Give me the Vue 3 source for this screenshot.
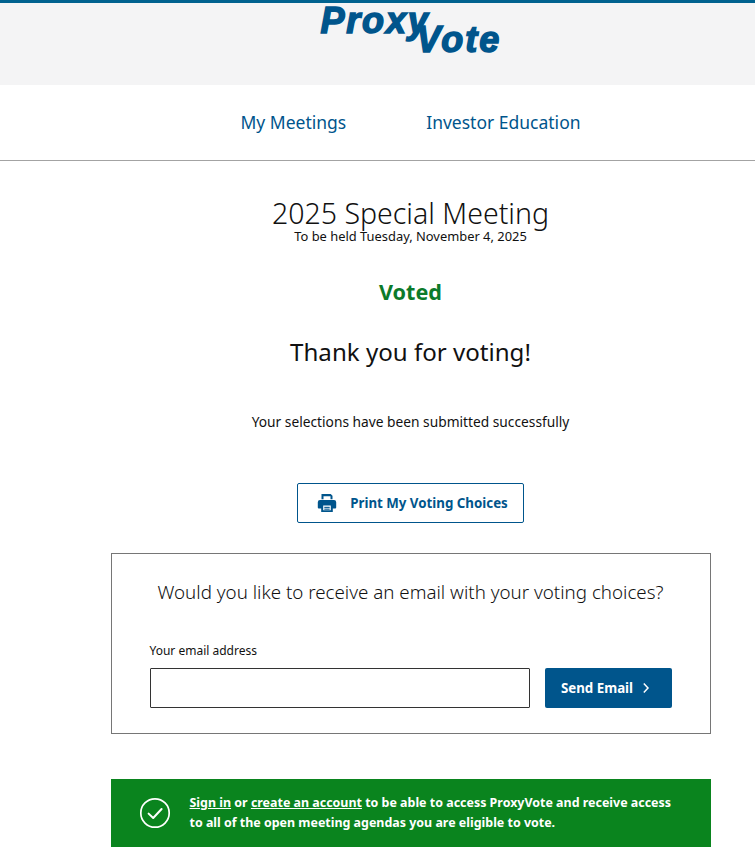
<template>
  <div class="page">
    <header class="brand">
      <div class="logo" aria-label="ProxyVote">
        <span class="logo-proxy">Proxy</span>
        <span class="logo-vote">Vote</span>
      </div>
    </header>

    <nav class="nav">
      <a v-for="item in navItems" :key="item" class="nav-link">{{ item }}</a>
    </nav>

    <main class="main">
      <h1 class="title">2025 Special Meeting</h1>
      <p class="held">To be held Tuesday, November 4, 2025</p>
      <p class="status">Voted</p>
      <h2 class="thanks">Thank you for voting!</h2>
      <p class="submitted">Your selections have been submitted successfully</p>

      <button class="print-btn" type="button">
        <svg class="print-icon" viewBox="0 0 20 20" width="20" height="20">
          <path fill="#00558c" d="M4.500 1h9.200L15.500 2.800V6.200h-2V3.200H6.500v3h-2z" />
          <path fill="#00558c" fill-rule="evenodd" d="M3 7h14a2.200 2.200 0 0 1 2.200 2.200v5.300a1 1 0 0 1-1 1h-2.400V19H4.200v-3.500H1.800a1 1 0 0 1-1-1V9.200A2.200 2.200 0 0 1 3 7zm3.200 5.600v4.700h7.600v-4.700z" />
          <rect x="7.300" y="13.800" width="5.400" height="1.100" fill="#00558c" />
          <rect x="7.300" y="15.600" width="5.400" height="1.100" fill="#00558c" />
        </svg>
        <span>Print My Voting Choices</span>
      </button>

      <section class="email-card">
        <h3 class="email-title">Would you like to receive an email with your voting choices?</h3>
        <label class="email-label" for="email">Your email address</label>
        <div class="email-row">
          <input id="email" class="email-input" type="text" />
          <button class="send-btn" type="button">
            <span>Send Email</span>
            <svg viewBox="0 0 8 12" width="8" height="12">
              <path d="M1.800 1.600 6 6l-4.200 4.400" fill="none" stroke="#fff" stroke-width="1.500" />
            </svg>
          </button>
        </div>
      </section>

      <section class="signin">
        <svg class="check" viewBox="0 0 32 32" width="32" height="32">
          <circle cx="16" cy="16" r="14.200" fill="none" stroke="#fff" stroke-width="1.700" />
          <path d="M9.600 16.600l4.600 4.400 8.400-9" fill="none" stroke="#fff" stroke-width="2" stroke-linecap="round" stroke-linejoin="round" />
        </svg>
        <p class="signin-text">
          <a>Sign in</a> or <a>create an account</a> to be able to access ProxyVote and receive access<br />
          to all of the open meeting agendas you are eligible to vote.
        </p>
      </section>
    </main>
  </div>
</template>

<script setup>
const navItems = ['My Meetings', 'Investor Education']
</script>

<style>
html,
body {
  margin: 0;
  background: #fff;
  overflow: hidden;
}
</style>

<style scoped>
.page {
  width: 755px;
  height: 856px;
  overflow: hidden;
  font-family: "Noto Sans", "Open Sans", sans-serif;
  color: #111;
}

.brand {
  height: 82px;
  background: #f4f4f5;
  border-top: 3px solid #00628f;
  display: flex;
  justify-content: center;
  padding-left: 66px;
}

.logo {
  width: 182px;
  height: 56px;
  position: relative;
  font-family: "Liberation Sans", Arial, sans-serif;
  font-weight: 700;
  font-style: italic;
  color: #00558c;
  font-size: 36px;
  line-height: 30px;
  -webkit-text-stroke: 1.500px #00558c;
}

.logo-proxy {
  position: absolute;
  left: 1px;
  top: 2.800px;
  letter-spacing: 1.800px;
}

.logo-vote {
  position: absolute;
  left: 97px;
  top: 22px;
  letter-spacing: 2px;
}

.nav {
  height: 76px;
  box-sizing: border-box;
  border-bottom: 1px solid #a3a3a3;
  display: flex;
  justify-content: center;
  align-items: center;
  gap: 80px;
  font-size: 17.500px;
  padding: 0 0 2px 66px;
}

.nav-link {
  color: #00558c;
}

.main {
  display: flex;
  flex-direction: column;
  align-items: center;
  text-align: center;
  padding-left: 66px;
}

.title {
  margin: 34px 0 0;
  font-size: 28.500px;
  line-height: 36px;
  font-weight: 300;
}

.held {
  margin: -3px 0 0;
  font-size: 12.900px;
  line-height: 16px;
}

.status {
  margin: 32px 0 0;
  font-size: 21.600px;
  line-height: 32px;
  font-weight: 700;
  color: #0c7a2a;
}

.thanks {
  margin: 27px 0 0;
  font-size: 24.100px;
  line-height: 34px;
  font-weight: 400;
}

.submitted {
  margin: 43px 0 0;
  font-size: 13.750px;
  line-height: 20px;
}

.print-btn {
  margin-top: 51px;
  width: 227px;
  height: 40px;
  box-sizing: border-box;
  border: 1px solid #00558c;
  border-radius: 2px;
  background: #fff;
  color: #00558c;
  font: 700 13.300px "Noto Sans", sans-serif;
  display: flex;
  align-items: center;
  justify-content: center;
  gap: 13px;
  padding: 0 0 0 4px;
}

.email-card {
  margin-top: 30px;
  width: 600px;
  height: 181px;
  box-sizing: border-box;
  border: 1px solid #767676;
  padding: 24px 38px 0;
  text-align: left;
}

.email-title {
  margin: 0;
  font-size: 18.750px;
  line-height: 28px;
  font-weight: 300;
  text-align: center;
  white-space: nowrap;
}

.email-label {
  display: block;
  margin-top: 37px;
  font-size: 12px;
  line-height: 16px;
}

.email-row {
  display: flex;
  gap: 15px;
  margin-top: 9px;
}

.email-input {
  width: 380px;
  height: 40px;
  box-sizing: border-box;
  border: 1px solid #333;
  border-radius: 1px;
  background: #fff;
}

.send-btn {
  width: 127px;
  height: 40px;
  border: 0;
  border-radius: 2px;
  background: #00558c;
  color: #fff;
  font: 700 13.300px "Noto Sans", sans-serif;
  display: flex;
  align-items: center;
  justify-content: center;
  gap: 9px;
  padding: 0 5px 0 0;
}

.signin {
  margin-top: 45px;
  width: 600px;
  height: 68px;
  box-sizing: border-box;
  background: #0a841e;
  color: #fff;
  display: flex;
  align-items: center;
  gap: 19px;
  padding-left: 28px;
  text-align: left;
}

.check {
  flex: none;
}

.signin-text {
  margin: 0;
  font-size: 12.450px;
  line-height: 20px;
  font-weight: 700;
  white-space: nowrap;
}

.signin-text a {
  text-decoration: underline;
}
</style>
